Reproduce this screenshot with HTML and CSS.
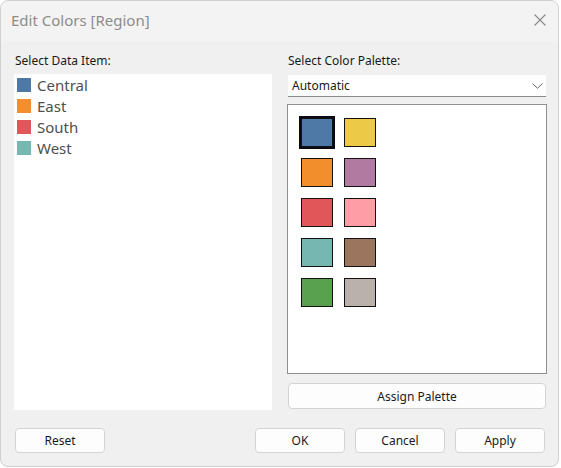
FILE: index.html
```html
<!DOCTYPE html>
<html>
<head>
<meta charset="utf-8">
<link rel="stylesheet" href="styles.css">
</head>
<body>
<div class="window">
  <div class="titlebar">
    <span class="title">Edit Colors [Region]</span>
    <svg class="close" width="12" height="12" viewBox="0 0 12 12"><path d="M0.5 0.5 L11.5 11.5 M11.5 0.5 L0.5 11.5" stroke="#8a8a8a" stroke-width="1.1" fill="none"/></svg>
  </div>
  <div class="content">
    <div class="col left">
      <div class="label">Select Data Item:</div>
      <div class="list">
        <div class="item"><span class="sw" style="background:#4e79a7"></span>Central</div>
        <div class="item"><span class="sw" style="background:#f28e2b"></span>East</div>
        <div class="item"><span class="sw" style="background:#e15759"></span>South</div>
        <div class="item"><span class="sw" style="background:#76b7b2"></span>West</div>
      </div>
    </div>
    <div class="col right">
      <div class="label">Select Color Palette:</div>
      <div class="select">
        <span>Automatic</span>
        <svg width="11" height="6" viewBox="0 0 11 6"><path d="M0.5 0.5 L5.5 5.3 L10.5 0.5" stroke="#666" stroke-width="1" fill="none"/></svg>
      </div>
      <div class="palette">
        <div class="grid">
          <span class="chip selected" style="background:#4e79a7"></span>
          <span class="chip" style="background:#edc948"></span>
          <span class="chip" style="background:#f28e2b"></span>
          <span class="chip" style="background:#b07aa1"></span>
          <span class="chip" style="background:#e15759"></span>
          <span class="chip" style="background:#ff9da7"></span>
          <span class="chip" style="background:#76b7b2"></span>
          <span class="chip" style="background:#9c755f"></span>
          <span class="chip" style="background:#59a14f"></span>
          <span class="chip" style="background:#bab0ac"></span>
        </div>
      </div>
      <button class="btn assign">Assign Palette</button>
    </div>
  </div>
  <div class="footer">
    <button class="btn">Reset</button>
    <div class="spacer"></div>
    <button class="btn">OK</button>
    <button class="btn">Cancel</button>
    <button class="btn">Apply</button>
  </div>
</div>
</body>
</html>
```
FILE: styles.css
```css
html, body {
  margin: 0;
  padding: 0;
  background: #ffffff;
}
body {
  font-family: "Noto Sans", "Open Sans", sans-serif;
  font-size: 12px;
  color: #1a1a1a;
}
.window {
  width: 557px;
  height: 465px;
  border: 1px solid #cfcfcf;
  border-radius: 8px;
  background: #f0f0f0;
  overflow: hidden;
  display: flex;
  flex-direction: column;
}
.titlebar {
  height: 40px;
  flex: none;
  background: #f3f3f3;
  display: flex;
  align-items: center;
  justify-content: space-between;
  padding: 0 12px 2px 10px;
  box-sizing: border-box;
}
.title {
  font-size: 15px;
  color: #8c8c8c;
}
.content {
  display: flex;
  gap: 15px;
  padding: 0 0 0 13px;
}
.col {
  display: flex;
  flex-direction: column;
}
.left {
  width: 258px;
}
.right {
  width: 260px;
}
.label {
  height: 17px;
  line-height: 17px;
  margin-top: 11px;
  padding-left: 1px;
  color: #1a1a1a;
}
.list {
  margin-top: 5px;
  height: 336px;
  background: #ffffff;
  padding-top: 0;
  box-sizing: border-box;
}
.item {
  height: 21px;
  display: flex;
  align-items: center;
  font-size: 15px;
  color: #505050;
  padding-left: 3px;
}
.sw {
  width: 14px;
  height: 14px;
  margin-right: 6px;
  flex: none;
}
.select {
  margin: 6px 1px 0 1px;
  height: 22px;
  background: #ffffff;
  border-bottom: 1px solid #8a8a8a;
  box-sizing: border-box;
  display: flex;
  align-items: center;
  justify-content: space-between;
  padding: 0 3px 0 4px;
}
.palette {
  margin-top: 7px;
  height: 270px;
  background: #ffffff;
  border: 1px solid #8f8f8f;
  box-sizing: border-box;
  padding: 13px 0 0 13px;
}
.grid {
  display: grid;
  grid-template-columns: 32px 32px;
  grid-auto-rows: 29px;
  column-gap: 11px;
  row-gap: 11px;
}
.chip {
  display: block;
  border: 1px solid #111;
  box-sizing: border-box;
}
.chip.selected {
  box-shadow: 0 0 0 2px #0a0a14;
}
.btn {
  font-family: "Noto Sans", "Open Sans", sans-serif;
  font-size: 12px;
  color: #1a1a1a;
  background: #fdfdfd;
  border: 1px solid #d3d3d3;
  border-radius: 4px;
  height: 26px;
  padding: 0;
  box-sizing: border-box;
}
.assign {
  margin: 9px 1px 0 1px;
  width: 258px;
}
.footer {
  display: flex;
  gap: 10px;
  padding: 0 0 0 14px;
  margin-top: 18px;
}
.footer .btn {
  width: 90px;
  height: 25px;
}
.spacer {
  width: 130px;
}
```
